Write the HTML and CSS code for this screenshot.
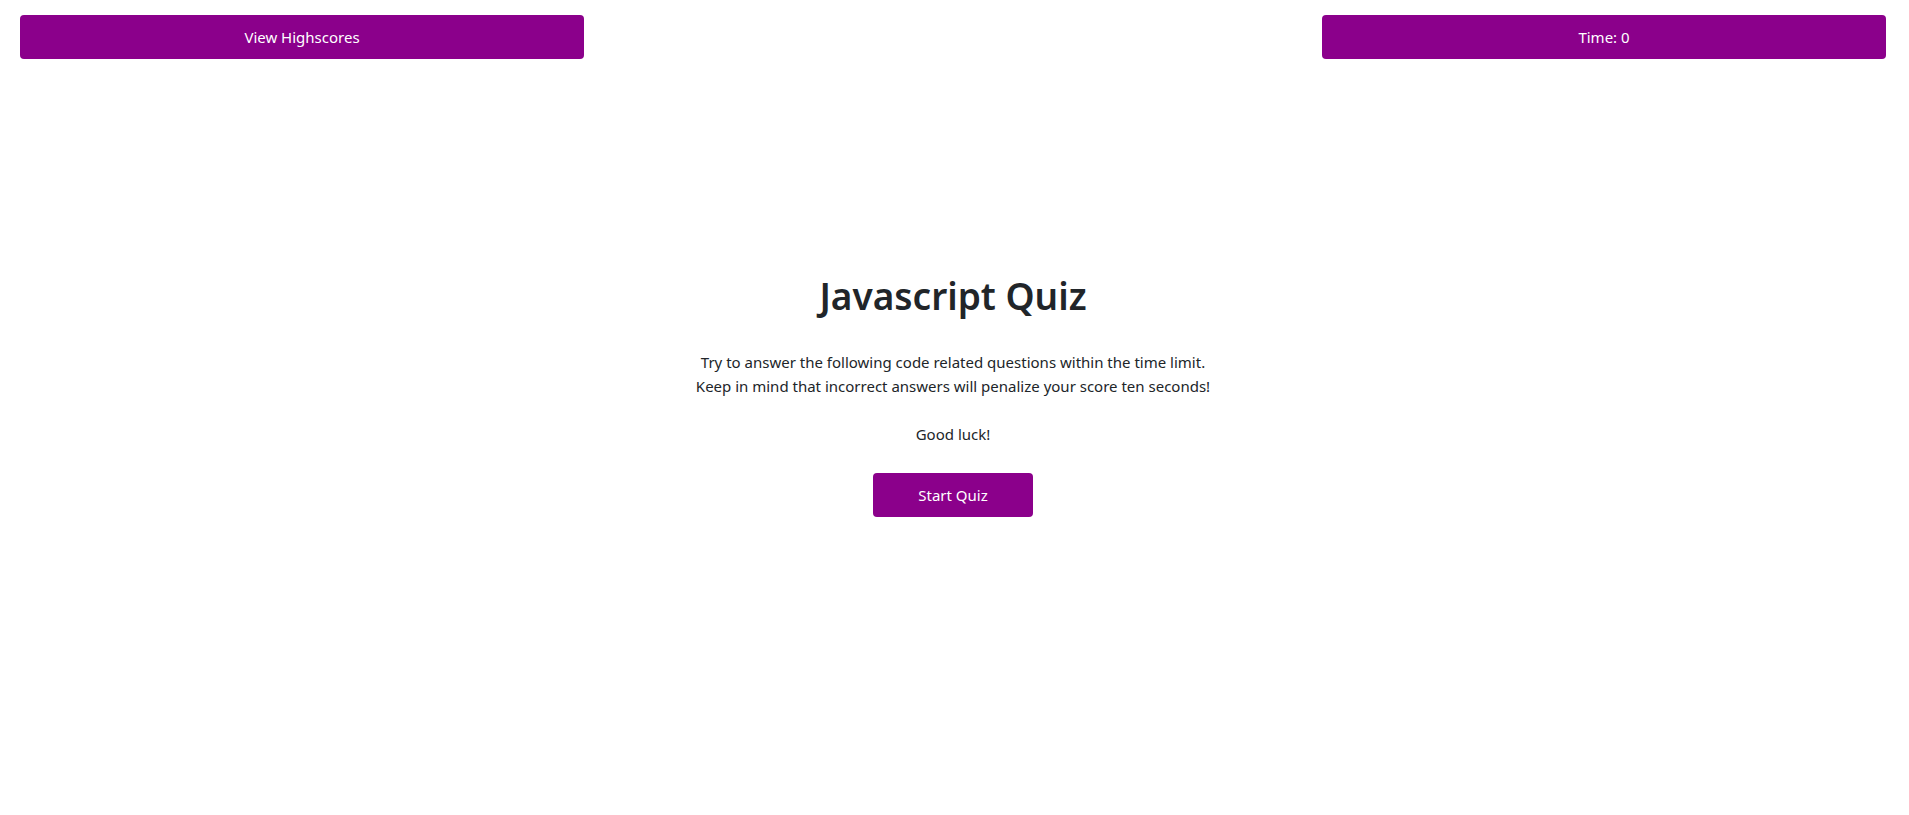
FILE: index.html
```html
<!DOCTYPE html>
<html lang="en">
<head>
<meta charset="utf-8">
<title>Javascript Quiz</title>
<link rel="stylesheet" href="styles.css">
</head>
<body>
<header class="topbar">
  <button class="btn btn-wide">View Highscores</button>
  <button class="btn btn-wide">Time: 0</button>
</header>
<main class="intro">
  <h1 class="title">Javascript Quiz</h1>
  <p class="lead">Try to answer the following code related questions within the time limit.<br>Keep in mind that incorrect answers will penalize your score ten seconds!<br><br>Good luck!</p>
  <button class="btn btn-start">Start Quiz</button>
</main>
</body>
</html>
```
FILE: styles.css
```css
* { box-sizing: border-box; }
html, body { margin: 0; padding: 0; background: #fff; }
body {
  font-family: "Noto Sans", "Open Sans", sans-serif;
  font-size: 15px;
  line-height: 24px;
  color: #212529;
}
.topbar {
  display: flex;
  justify-content: space-between;
  padding: 15px 23px 0 20px;
}
.btn {
  font-family: inherit;
  font-size: 15px;
  line-height: 24px;
  color: #fff;
  background: #8b008b;
  border: none;
  border-radius: 4px;
  height: 44px;
  padding: 0 12px;
  cursor: pointer;
}
.btn-wide { width: 564px; }
.intro {
  display: flex;
  flex-direction: column;
  align-items: center;
  padding-top: 213px;
  padding-right: 3px;
}
.title {
  margin: 0;
  font-size: 37px;
  font-weight: 600;
  line-height: 48px;
}
.lead {
  margin: 30px 0 27px;
  text-align: center;
}
.btn-start { width: 160px; }
```
